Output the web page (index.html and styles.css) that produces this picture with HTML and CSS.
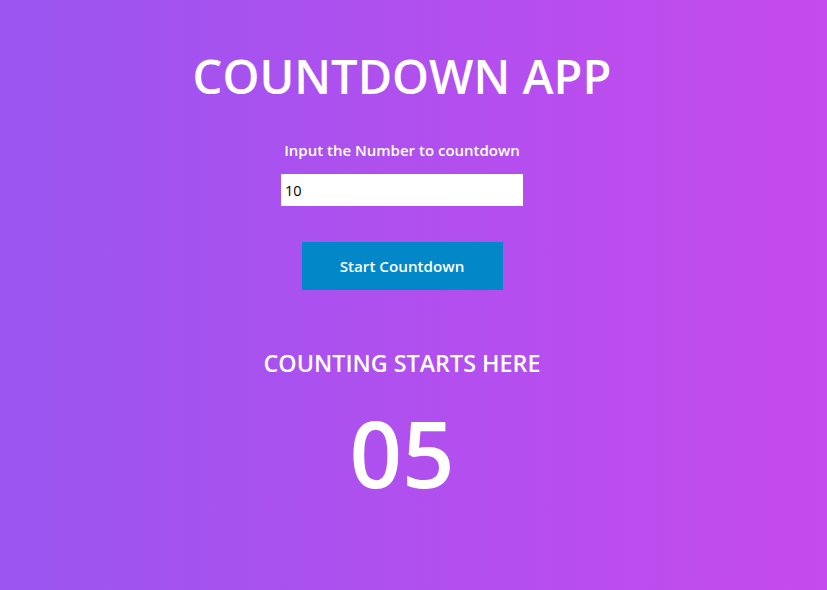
FILE: index.html
```html
<!DOCTYPE html>
<html>
<head>
<meta charset="utf-8">
<link rel="stylesheet" href="styles.css">
</head>
<body>
<main class="app">
  <h1 class="title">COUNTDOWN APP</h1>
  <label class="label" for="num">Input the Number to countdown</label>
  <input class="num-input" id="num" type="text" value="10">
  <button class="start-btn">Start Countdown</button>
  <h2 class="subtitle">COUNTING STARTS HERE</h2>
  <div class="count">05</div>
</main>
</body>
</html>
```
FILE: styles.css
```css
html, body {
  margin: 0;
  height: 100%;
}
body {
  background: linear-gradient(to right, #9a55f0, #c64aed);
  font-family: "Open Sans", "Noto Sans", sans-serif;
  color: #fff;
  overflow: hidden;
}
.app {
  width: 804px;
  display: flex;
  flex-direction: column;
  align-items: center;
}
.title {
  margin: 48px 0 0;
  font-size: 47px;
  font-weight: 600;
  line-height: 56px;
  letter-spacing: 0;
}
.label {
  margin-top: 36px;
  font-size: 15px;
  font-weight: 600;
  line-height: 20px;
}
.num-input {
  margin-top: 14px;
  width: 242px;
  height: 32px;
  box-sizing: border-box;
  border: none;
  outline: none;
  padding: 0 4px;
  font-family: "Open Sans", sans-serif;
  font-size: 14.5px;
  color: #000;
  background: #fff;
}
.start-btn {
  margin-top: 36px;
  width: 201px;
  height: 48px;
  border: none;
  background: #0288c8;
  color: #fff;
  font-family: "Open Sans", sans-serif;
  font-size: 15.2px;
  font-weight: 600;
}
.subtitle {
  margin: 58px 0 0;
  font-size: 23.3px;
  font-weight: 600;
  line-height: 30px;
}
.count {
  margin-top: 20px;
  font-size: 92px;
  font-weight: 600;
  line-height: 110px;
}
```
